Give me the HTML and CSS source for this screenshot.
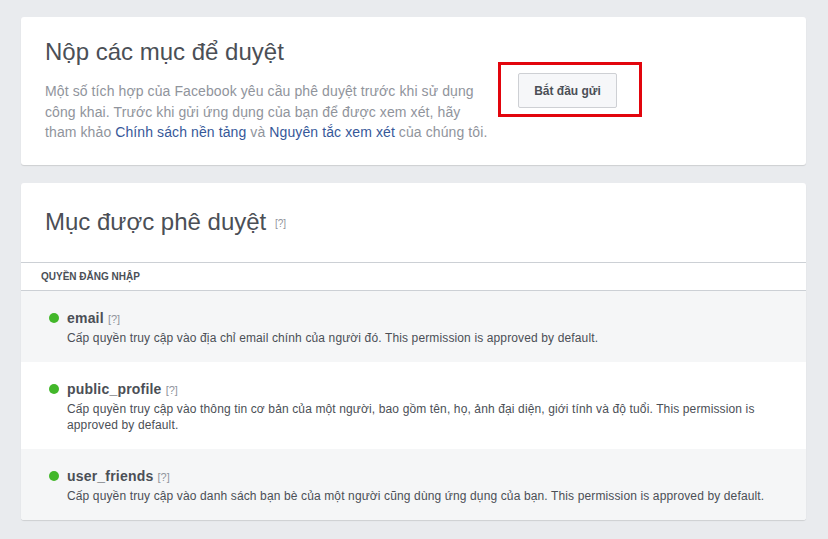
FILE: index.html
```html
<!DOCTYPE html>
<html lang="vi">
<head>
<meta charset="utf-8">
<link rel="stylesheet" href="styles.css">
</head>
<body>
<div class="page">
  <section class="card submit-card">
    <div class="submit-text">
      <h1 class="card-title">Nộp các mục để duyệt</h1>
      <p class="desc">Một số tích hợp của Facebook yêu cầu phê duyệt trước khi sử dụng công khai. Trước khi gửi ứng dụng của bạn để được xem xét, hãy tham khảo <a class="link" href="#">Chính sách nền tảng</a> và <a class="link" href="#">Nguyên tắc xem xét</a> của chúng tôi.</p>
    </div>
    <div class="highlight">
      <button class="btn">Bắt đầu gửi</button>
    </div>
  </section>

  <section class="card approved-card">
    <h2 class="card-title approved-title">Mục được phê duyệt <span class="help">[?]</span></h2>
    <div class="section-head">QUYỀN ĐĂNG NHẬP</div>
    <ul class="perm-list">
      <li class="perm alt">
        <div class="perm-name"><span class="dot"></span>email <span class="help small">[?]</span></div>
        <div class="perm-desc">Cấp quyền truy cập vào địa chỉ email chính của người đó. This permission is approved by default.</div>
      </li>
      <li class="perm">
        <div class="perm-name"><span class="dot"></span>public_profile <span class="help small">[?]</span></div>
        <div class="perm-desc">Cấp quyền truy cập vào thông tin cơ bản của một người, bao gồm tên, họ, ảnh đại diện, giới tính và độ tuổi. This permission is approved by default.</div>
      </li>
      <li class="perm alt">
        <div class="perm-name"><span class="dot"></span>user_friends <span class="help small">[?]</span></div>
        <div class="perm-desc">Cấp quyền truy cập vào danh sách bạn bè của một người cũng dùng ứng dụng của bạn. This permission is approved by default.</div>
      </li>
    </ul>
  </section>
</div>
</body>
</html>
```

FILE: styles.css
```css
* { box-sizing: border-box; }
html, body { margin: 0; padding: 0; }
body {
  background: #e9ebee;
  font-family: "Liberation Sans", Arial, Helvetica, sans-serif;
  color: #1d2129;
}
.page {
  padding: 17px 22px 18px 21px;
  display: flex;
  flex-direction: column;
  gap: 18px;
}
.card {
  background: #fff;
  border-radius: 3px;
  box-shadow: 0 1px 1px rgba(0,0,0,0.12);
}
.submit-card {
  display: flex;
  align-items: flex-start;
  padding: 20px 24px 24px 24px;
  height: 148px;
}
.submit-text { width: 447px; margin-right: 6px; }
.card-title {
  margin: 0;
  font-size: 24px;
  font-weight: normal;
  color: #4b4f56;
  line-height: 30px;
}
.desc {
  margin: 14px 0 0 0;
  font-size: 14px;
  line-height: 20.5px;
  letter-spacing: 0.1px;
  color: #90949c;
}
.link { color: #365899; text-decoration: none; }
.highlight {
  margin-top: 25px;
  border: 3px solid #e2050d;
  padding: 8px 22px 6px 17px;
}
.btn {
  display: block;
  width: 99px;
  height: 35px;
  border: 1px solid #ced0d4;
  border-radius: 2px;
  background: #f6f7f9;
  color: #4b4f56;
  font-family: inherit;
  font-size: 12px;
  font-weight: bold;
  padding: 0;
}
.approved-card { padding: 0; overflow: hidden; }
.approved-title { padding: 24px 24px 25px 24px; }
.help {
  font-size: 10px;
  line-height: 10px;
  color: #90949c;
  vertical-align: 3px;
  margin-left: 2px;
  letter-spacing: 0;
}
.help.small { vertical-align: 0; margin-left: 0; font-weight: normal; font-size: 11px; }
.section-head {
  border-top: 1px solid #ccd0d5;
  border-bottom: 1px solid #ccd0d5;
  padding: 8px 20px 7px 20px;
  font-size: 10px;
  font-weight: bold;
  color: #4b4f56;
  line-height: 12px;
}
.perm-list { list-style: none; margin: 0; padding: 0; }
.perm { padding: 18px 24px 16px 46px; }
.perm.alt { background: #f5f6f7; }
.perm-name {
  position: relative;
  font-size: 14px;
  font-weight: bold;
  color: #4b4f56;
  line-height: 18px;
  letter-spacing: 0.2px;
}
.dot {
  position: absolute;
  left: -18px;
  top: 4px;
  width: 10px;
  height: 10px;
  border-radius: 50%;
  background: #42b72a;
}
.perm-desc {
  margin-top: 3px;
  font-size: 12px;
  line-height: 16px;
  letter-spacing: 0.13px;
  color: #4b4f56;
}
```
